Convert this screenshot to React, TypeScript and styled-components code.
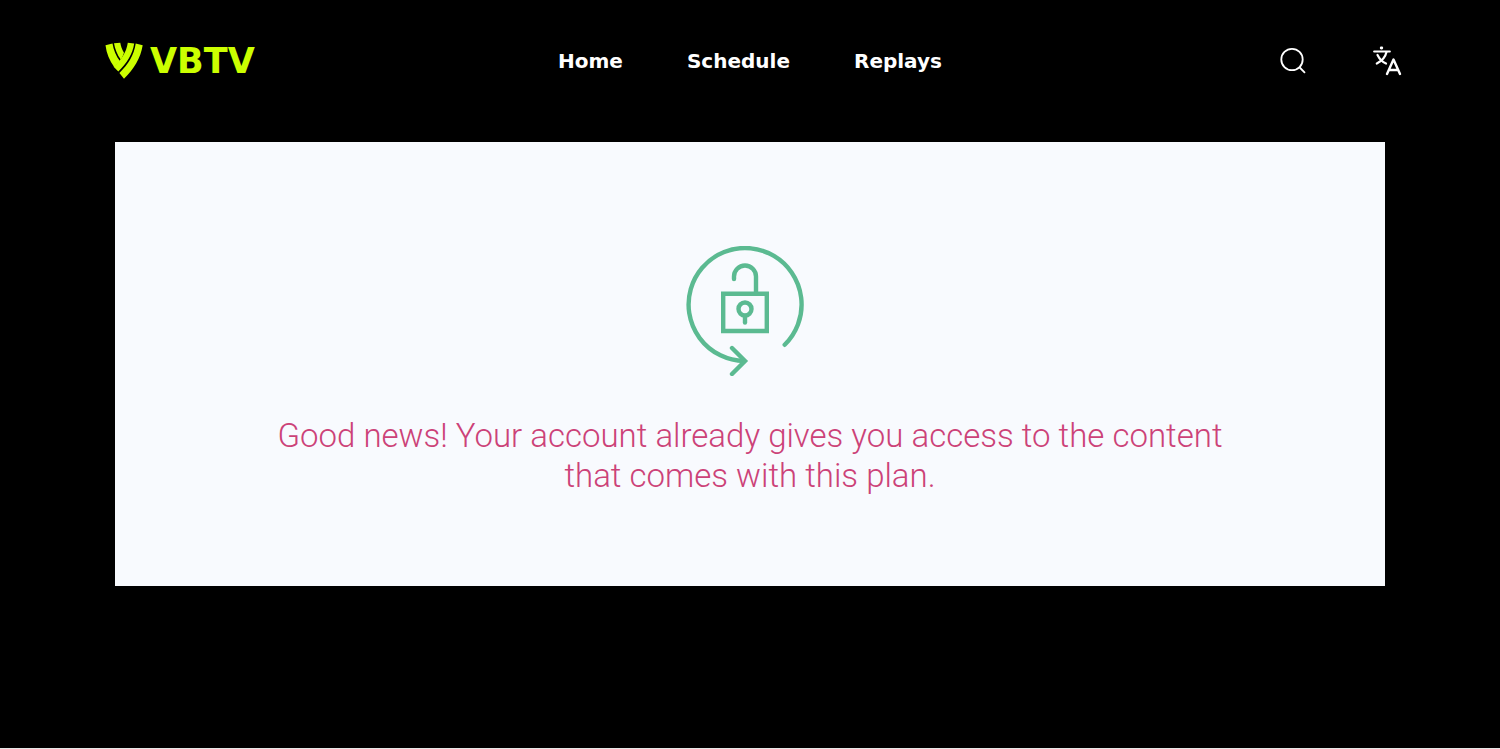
import React from 'react';
import styled, { createGlobalStyle } from 'styled-components';

const GlobalStyle = createGlobalStyle`
  *, *::before, *::after { box-sizing: border-box; }
  body { margin: 0; background: #000; }
`;

const Page = styled.div`
  min-height: 100vh;
  background: #000;
  border-bottom: 1px solid #e6e6e6;
  font-family: Roboto, "Liberation Sans", sans-serif;
`;

const Header = styled.header`
  display: grid;
  grid-template-columns: 1fr auto 1fr;
  align-items: center;
  height: 122px;
  padding: 0 98px;
`;

const Brand = styled.a`
  display: inline-flex;
  align-items: center;
  gap: 7px;
  justify-self: start;
  padding: 0 7px;
  color: #cf0;
  text-decoration: none;
`;

const BrandName = styled.span`
  font: 700 35px/40px "DejaVu Sans", sans-serif;
`;

const Nav = styled.nav`
  display: flex;
  gap: 64px;
`;

const NavLink = styled.a`
  color: #fff;
  font: 700 20px/32px "DejaVu Sans", sans-serif;
  text-decoration: none;
`;

const Actions = styled.div`
  display: flex;
  justify-content: flex-end;
  gap: 64px;
`;

const IconButton = styled.button`
  display: flex;
  padding: 0;
  border: 0;
  background: none;
  color: #fff;
  cursor: pointer;
`;

const Card = styled.main`
  display: flex;
  flex-direction: column;
  align-items: center;
  gap: 40px;
  margin: 20px 115px 0;
  padding: 104px 24px 90px;
  background: #f8fafe;
`;

const Message = styled.p`
  max-width: 980px;
  margin: 0;
  color: #cc4278;
  font-size: 33px;
  font-weight: 300;
  line-height: 40px;
  text-align: center;
`;

const LogoMark = () => (
  <svg width="38" height="38" viewBox="0 0 38 38" fill="currentColor" aria-hidden="true">
    <path d="M.5 3.3 7.5 1.5C8.5 8 11 14 15 19.200L9.200 25C4.500 18.800 1.500 11.500.5 3.300Z" />
    <path d="M9 1.200 15.300.8C15.800 4.200 17 7.500 19 10.700 18.200 13.200 17.200 15.500 15.900 17.700 12.300 12.700 9.900 7 9 1.200Z" />
    <path d="M22.800.8 29.200 1.400C27.500 12.300 22.100 20.700 13.300 29.500L8.600 24.800C16.300 18 21.300 10.500 22.800.8Z" />
    <path d="M30.700 1.500 37.700 3.300C35.500 16.500 29 26.900 19 36.700L14.400 31C23.500 22 29 12.900 30.700 1.500Z" />
  </svg>
);

const SearchIcon = () => (
  <svg width="30" height="30" viewBox="0 0 30 30" fill="none" stroke="currentColor" strokeWidth="1.800" strokeLinecap="round" aria-hidden="true">
    <circle cx="14" cy="13.500" r="10.700" />
    <path d="m21.700 21.500 4.800 4.800" />
  </svg>
);

const TranslateIcon = () => (
  <svg width="30" height="30" viewBox="0 0 30 30" fill="none" stroke="currentColor" strokeWidth="2.200" strokeLinecap="round" aria-hidden="true">
    <path d="M9.200 2h.6" strokeWidth="2.800" />
    <path d="M2.200 5.500h15.600" />
    <path d="M14.500 6C13.300 11.500 9.500 15.200 4.800 17.500" />
    <path d="M5.500 9C7.500 13 10.500 16 14 17.500" />
    <path d="m15 28 6.500-14.500L28 28M17 24h9" strokeLinejoin="round" strokeWidth="2.400" />
  </svg>
);

const UnlockedIcon = () => (
  <svg width="130" height="130" viewBox="0 0 130 130" fill="none" stroke="#5bba91" strokeWidth="4.400" strokeLinecap="round" aria-hidden="true">
    <path d="M99.700 98.800A56.500 56.500 0 1 0 59 115" />
    <path d="m47 102 13 13L47 128" />
    <path d="M38.200 47.800h43.600v37.200H38.200z" />
    <path d="M49 33v-2.500a11 11 0 0 1 22 0V47" />
    <circle cx="60" cy="63" r="6.500" />
    <path d="M60 70v6.500" />
  </svg>
);

const LINKS = ['Home', 'Schedule', 'Replays'];

export default function App() {
  return (
    <>
      <GlobalStyle />
      <Page>
        <Header>
          <Brand href="#">
            <LogoMark />
            <BrandName>VBTV</BrandName>
          </Brand>
          <Nav aria-label="Main">
            {LINKS.map((label) => (
              <NavLink key={label} href="#">{label}</NavLink>
            ))}
          </Nav>
          <Actions>
            <IconButton type="button" aria-label="Search"><SearchIcon /></IconButton>
            <IconButton type="button" aria-label="Change language"><TranslateIcon /></IconButton>
          </Actions>
        </Header>
        <Card>
          <UnlockedIcon />
          <Message>
            Good news! Your account already gives you access to the content that comes with this plan.
          </Message>
        </Card>
      </Page>
    </>
  );
}
